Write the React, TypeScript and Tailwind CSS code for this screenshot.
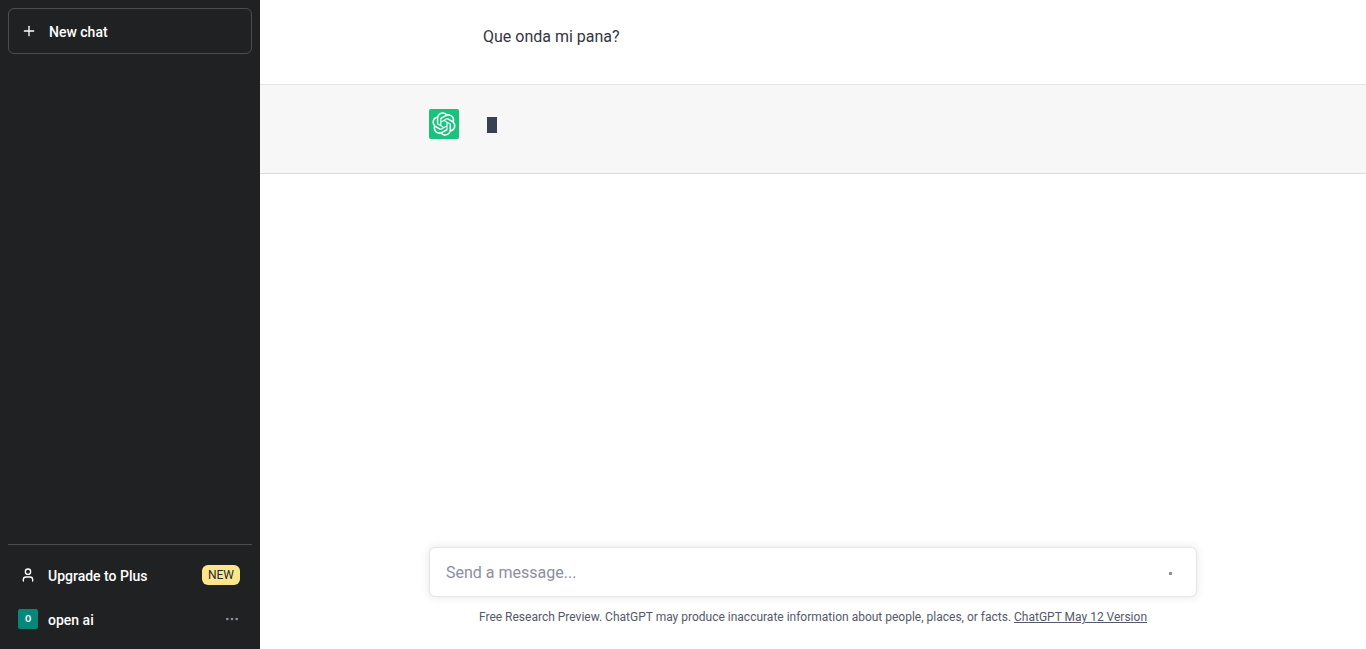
import { MoreHorizontal, Plus, User } from "lucide-react";

function OpenAILogo() {
  return (
    <svg className="size-6" viewBox="0 0 41 41" fill="none" aria-hidden="true">
      <path
        fill="currentColor"
        d="M37.5324 16.8707C37.9808 15.5241 38.1363 14.0974 37.9886 12.6859C37.8409 11.2744 37.3934 9.91076 36.676 8.68622C35.6126 6.83404 33.9882 5.3676 32.0373 4.4985C30.0864 3.62941 27.9098 3.40259 25.8215 3.85078C24.8796 2.7893 23.7219 1.94125 22.4257 1.36341C21.1295 0.785575 19.7249 0.491269 18.3058 0.500197C16.1708 0.495044 14.0893 1.16803 12.3614 2.42214C10.6335 3.67624 9.34853 5.44666 8.6917 7.47815C7.30085 7.76286 5.98686 8.3414 4.8377 9.17505C3.68854 10.0087 2.73073 11.0782 2.02839 12.312C0.956464 14.1591 0.498905 16.2988 0.721698 18.4228C0.944492 20.5467 1.83612 22.5449 3.268 24.1293C2.81966 25.4759 2.66413 26.9026 2.81182 28.3141C2.95951 29.7256 3.40701 31.0892 4.12437 32.3138C5.18791 34.1659 6.8123 35.6322 8.76321 36.5013C10.7141 37.3704 12.8907 37.5973 14.9789 37.1492C15.9208 38.2107 17.0786 39.0587 18.3747 39.6366C19.6709 40.2144 21.0755 40.5087 22.4946 40.4998C24.6307 40.5054 26.7133 39.8321 28.4418 38.5772C30.1704 37.3223 31.4556 35.5506 32.1119 33.5179C33.5027 33.2332 34.8167 32.6547 35.9659 31.821C37.115 30.9874 38.0728 29.9178 38.7752 28.684C39.8458 26.8371 40.3023 24.6979 40.0789 22.5748C39.8556 20.4517 38.9639 18.4544 37.5324 16.8707ZM22.4978 37.8849C20.7443 37.8874 19.0459 37.2733 17.6994 36.1501C17.7601 36.117 17.8666 36.0586 17.936 36.0161L25.9004 31.4156C26.1003 31.3019 26.2663 31.137 26.3813 30.9378C26.4964 30.7386 26.5563 30.5124 26.5549 30.2825V19.0542L29.9213 20.998C29.9389 21.0068 29.9541 21.0198 29.9656 21.0359C29.977 21.052 29.9842 21.0707 29.9867 21.0902V30.3889C29.9842 32.375 29.1946 34.2791 27.7909 35.6841C26.3872 37.0892 24.4838 37.8806 22.4978 37.8849ZM6.39227 31.0064C5.51397 29.4888 5.19742 27.7107 5.49804 25.9832C5.55718 26.0187 5.66048 26.0818 5.73461 26.1244L13.699 30.7248C13.8975 30.8408 14.1233 30.902 14.3532 30.902C14.583 30.902 14.8088 30.8408 15.0073 30.7248L24.731 25.1103V28.9979C24.7321 29.0177 24.7283 29.0376 24.7199 29.0556C24.7115 29.0736 24.6988 29.0893 24.6829 29.1012L16.6317 33.7497C14.9096 34.7416 12.8643 35.0097 10.9447 34.4954C9.02506 33.9811 7.38785 32.7263 6.39227 31.0064ZM4.29707 13.6194C5.17156 12.0998 6.55279 10.9364 8.19885 10.3327C8.19885 10.4013 8.19491 10.5228 8.19491 10.6071V19.808C8.19351 20.0378 8.25334 20.2638 8.36823 20.4629C8.48312 20.6619 8.64893 20.8267 8.84863 20.9404L18.5723 26.5542L15.206 28.4979C15.1894 28.5089 15.1703 28.5155 15.1505 28.5173C15.1307 28.5191 15.1107 28.516 15.0924 28.5082L7.04046 23.8557C5.32135 22.8601 4.06716 21.2235 3.55289 19.3046C3.03862 17.3858 3.30624 15.3413 4.29707 13.6194ZM31.955 20.0556L22.2312 14.4411L25.5976 12.4981C25.6142 12.4872 25.6333 12.4805 25.6531 12.4787C25.6729 12.4769 25.6928 12.4801 25.7111 12.4879L33.7631 17.1364C34.9967 17.849 36.0017 18.8982 36.6606 20.1613C37.3194 21.4244 37.6047 22.849 37.4832 24.2684C37.3617 25.6878 36.8382 27.0432 35.9743 28.1759C35.1103 29.3086 33.9415 30.1717 32.6047 30.6641C32.6047 30.5947 32.6047 30.4733 32.6047 30.3889V21.188C32.6066 20.9586 32.5474 20.7328 32.4332 20.5338C32.319 20.3348 32.154 20.1698 31.955 20.0556ZM35.3055 15.0128C35.2464 14.9765 35.1431 14.9142 35.069 14.8717L27.1045 10.2712C26.906 10.1554 26.6803 10.0943 26.4504 10.0943C26.2206 10.0943 25.9948 10.1554 25.7963 10.2712L16.0726 15.8858V11.9982C16.0715 11.9783 16.0753 11.9585 16.0837 11.9405C16.0921 11.9225 16.1048 11.9068 16.1207 11.8949L24.1719 7.25025C25.4053 6.53903 26.8158 6.19376 28.2383 6.25482C29.6608 6.31589 31.0364 6.78077 32.2044 7.59508C33.3723 8.40939 34.2842 9.53945 34.8334 10.8531C35.3826 12.1667 35.5464 13.6095 35.3055 15.0128ZM14.2424 21.9419L10.8752 19.9981C10.8576 19.9893 10.8423 19.9763 10.8309 19.9602C10.8195 19.9441 10.8122 19.9254 10.8098 19.9058V10.6071C10.8107 9.18295 11.2173 7.78848 11.9819 6.58696C12.7466 5.38544 13.8377 4.42659 15.1275 3.82264C16.4173 3.21869 17.8524 2.99464 19.2649 3.1767C20.6775 3.35876 22.0089 3.93941 23.1034 4.85067C23.0427 4.88379 22.937 4.94215 22.8668 4.98473L14.9024 9.58517C14.7025 9.69878 14.5366 9.86356 14.4215 10.0626C14.3065 10.2616 14.2466 10.4877 14.2479 10.7175L14.2424 21.9419ZM16.071 17.9991L20.4018 15.4978L24.7325 17.9975V22.9985L20.4018 25.4983L16.071 22.9985V17.9991Z"
      />
    </svg>
  );
}

function Sidebar() {
  return (
    <aside className="flex w-65 shrink-0 flex-col justify-between bg-[#202123] p-2 text-sm font-medium text-white">
      <button
        type="button"
        className="flex h-[46px] items-center gap-3 rounded-md border border-white/20 px-3"
      >
        <Plus className="size-4" strokeWidth={2} />
        <span className="pt-0.5">New chat</span>
      </button>

      <nav className="flex flex-col border-t border-white/20 pt-2">
        <button type="button" className="flex h-11 items-center gap-3 px-3 text-left">
          <User className="size-4" strokeWidth={2} />
          <span className="grow pt-0.5">Upgrade to Plus</span>
          <span className="rounded-md bg-[#fde68a] px-1.5 text-xs leading-5 font-normal text-gray-800">
            NEW
          </span>
        </button>
        <button type="button" className="flex h-11 items-center gap-2.5 pr-3 pl-2.5 text-left">
          <span className="flex size-5 items-center justify-center rounded-xs bg-[#05887a] text-[9px] font-bold">
            O
          </span>
          <span className="grow pt-0.5">open ai</span>
          <MoreHorizontal className="size-4 text-[#8e8ea0]" />
        </button>
      </nav>
    </aside>
  );
}

export default function App() {
  return (
    <div className="flex min-h-screen bg-white font-['Roboto',sans-serif]">
      <Sidebar />
      <main className="flex min-w-0 grow flex-col">
        <section className="border-b border-black/10">
          <div className="mx-auto flex max-w-3xl pt-5 pb-6">
            <p className="min-h-10 pt-[3px] pl-[54px] text-base leading-7 text-[#343541]">
              Que onda mi pana?
            </p>
          </div>
        </section>
        <section className="border-b border-black/10 bg-[#f7f7f8]">
          <div className="mx-auto flex max-w-3xl gap-7 py-6">
            <span className="flex size-[30px] items-center justify-center rounded-xs bg-[#19c37d] text-white">
              <OpenAILogo />
            </span>
            <div className="min-h-10 pt-2">
              <span className="block h-4 w-2.5 bg-[#374151]" />
            </div>
          </div>
        </section>

        <footer className="mx-auto mt-auto w-full max-w-3xl pb-6">
          <form className="flex h-[50px] items-center rounded-md border border-black/10 bg-white px-4 pt-0.5 shadow-[0_0_10px_rgba(0,0,0,0.1)]">
            <input
              type="text"
              aria-label="Message"
              placeholder="Send a message..."
              className="min-w-0 grow text-base outline-none placeholder:text-[#8e8ea0]"
            />
            <span className="mr-2 size-[3px] bg-[#8e8ea0]" />
          </form>
          <p className="pt-3 text-center text-xs text-[#565869]">
            Free Research Preview. ChatGPT may produce inaccurate information about people, places, or
            facts.{" "}
            <a href="#release-notes" className="underline">
              ChatGPT May 12 Version
            </a>
          </p>
        </footer>
      </main>
    </div>
  );
}
